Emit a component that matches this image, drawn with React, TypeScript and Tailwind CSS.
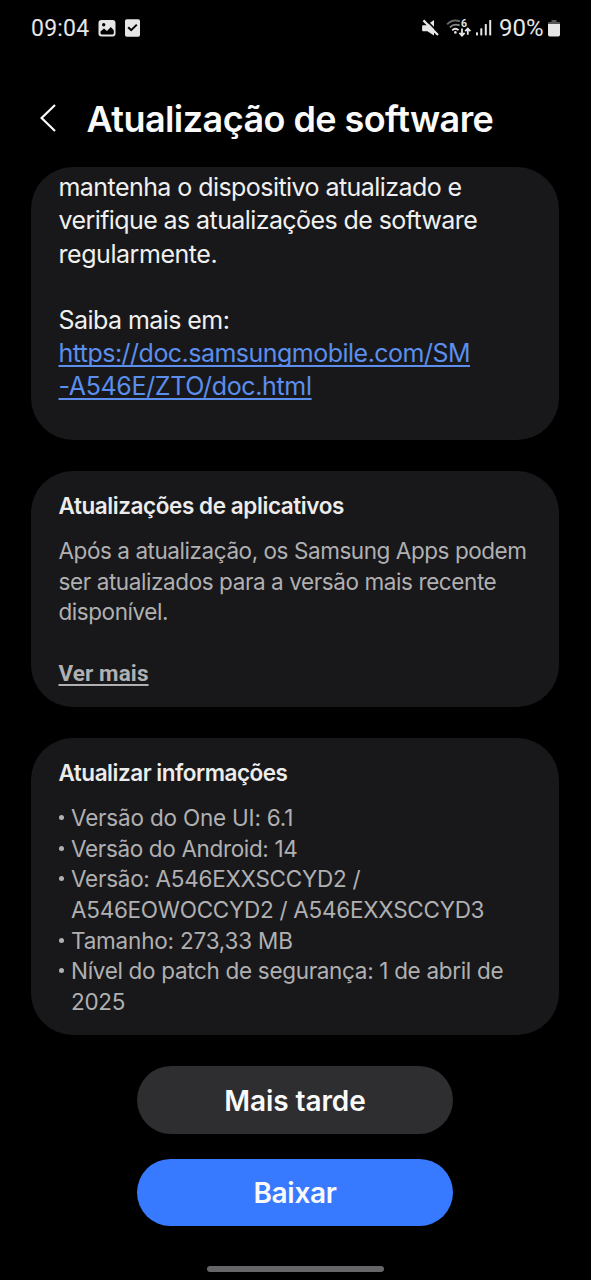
import type { ReactNode } from "react";

const updateInfo = [
  { lines: ["Versão do One UI: 6.1"], tracking: "tracking-[-0.2px]" },
  { lines: ["Versão do Android: 14"], tracking: "tracking-[-0.35px]" },
  {
    lines: ["Versão: A546EXXSCCYD2 /", "A546EOWOCCYD2 / A546EXXSCCYD3"],
    tracking: "tracking-[-0.27px]",
  },
  { lines: ["Tamanho: 273,33 MB"], tracking: "tracking-[-0.2px]" },
  {
    lines: ["Nível do patch de segurança: 1 de abril de", "2025"],
    tracking: "tracking-[-0.32px]",
  },
];

function StatusBar() {
  return (
    <div className="flex h-14 items-center justify-between pr-[31px] pl-[31px] text-[#e6e6e6]">
      <div className="flex items-center">
        <span className="w-[59px] font-[Roboto] text-[23px] leading-none tracking-[0.2px] whitespace-nowrap">
          09:04
        </span>
        <svg className="ml-2 h-[18px] w-[18px]" viewBox="0 0 18 18">
          <rect x="0.5" y="1" width="17" height="16.5" rx="3" fill="currentColor" />
          <circle cx="5.7" cy="5.7" r="1.7" fill="#000" />
          <path d="M2.5 12.5 6 9.5l3 2.6 3.8-4 3 3.2V14a1.6 1.6 0 0 1-1.6 1.6H4A1.6 1.6 0 0 1 2.5 14z" fill="#000" />
        </svg>
        <svg className="ml-[9px] h-[18px] w-[15px]" viewBox="0 0 15 18">
          <rect y="0.3" width="15" height="17.5" rx="1.8" fill="currentColor" />
          <path d="m3.2 8.2 3 3 5.6-5.6" fill="none" stroke="#000" strokeWidth="2" />
        </svg>
      </div>
      <div className="flex items-center">
        <svg className="h-[18px] w-[18px]" viewBox="0 0 18 18">
          <path d="M2 6.3h3.6L13 1v15.6l-6.6-4.4H2a.9.9 0 0 1-.9-.9V7.2A.9.9 0 0 1 2 6.3z" fill="currentColor" />
          <path d="m3.8-.2 15 15" stroke="#000" strokeWidth="1.6" />
          <path d="m2.4 1.4 14.6 14.6" stroke="currentColor" strokeWidth="2.2" />
        </svg>
        <svg className="ml-[7px] h-[20px] w-[25px]" viewBox="0 0 25 20">
          <g fill="none" strokeWidth="1.8">
            <path d="M1.2 6.3C4.6 2.6 9.6 1.8 14 3.4" stroke="#666" />
            <path d="M3.8 9.3C6.6 6.6 10.4 6 13.6 7.4" stroke="#888" />
            <path d="M6.2 12.3c1.9-1.8 4.5-1.8 6.4-.2" stroke="currentColor" />
            <path d="M16 10.6v7M13.4 14.9l2.6 2.7 2.6-2.7" stroke="currentColor" />
            <path d="M21.8 16.8V10.6M19.2 13.2l2.6-2.7 2.6 2.7" stroke="currentColor" />
          </g>
          <circle cx="9.4" cy="14.4" r="1.3" fill="currentColor" />
          <text x="15" y="8.6" fontFamily="Roboto" fontSize="10.5" fontWeight="700" fill="currentColor">
            6
          </text>
        </svg>
        <svg className="ml-[5px] h-[18px] w-[16px]" viewBox="0 0 16 18">
          <g fill="currentColor">
            <rect x="0" y="13.2" width="2" height="3.2" rx="0.6" />
            <rect x="4.3" y="9.2" width="2" height="7.2" rx="0.6" />
            <rect x="8.8" y="5" width="2" height="11.4" rx="0.6" />
            <rect x="13.2" y="1" width="2" height="15.4" rx="0.6" />
          </g>
        </svg>
        <span className="ml-[7px] w-[46px] font-[Roboto] text-[24px] leading-none whitespace-nowrap">
          90%
        </span>
        <svg className="ml-[3px] h-[18px] w-[12px]" viewBox="0 0 12 18">
          <path d="M3.5 1h5v2H11a1 1 0 0 1 1 1v2H0V4a1 1 0 0 1 1-1h2.5z" fill="#555" />
          <path d="M0 5h12v10.8a1.8 1.8 0 0 1-1.8 1.8H1.8A1.8 1.8 0 0 1 0 15.8z" fill="currentColor" />
        </svg>
      </div>
    </div>
  );
}

function Card({ className, children }: { className: string; children: ReactNode }) {
  return (
    <section
      className={`w-full overflow-hidden rounded-[42px] bg-[#18181a] px-[27.5px] whitespace-nowrap ${className}`}
    >
      {children}
    </section>
  );
}

export default function App() {
  return (
    <div className="flex h-[1280px] w-[591px] flex-col overflow-hidden bg-black font-[Inter,sans-serif]">
      <StatusBar />
      <header className="flex h-[111px] items-center pl-[39px] text-[#fafafa]">
        <svg className="mt-[13px] h-[30px] w-[18px]" viewBox="0 0 18 30" fill="none">
          <path d="M16 2 2.6 15 16 28" stroke="currentColor" strokeWidth="2.2" />
        </svg>
        <h1 className="mt-[14px] ml-[29.5px] text-[36px] leading-[44px] font-semibold tracking-[-0.56px] whitespace-nowrap">
          Atualização de software
        </h1>
      </header>

      <main className="flex flex-col gap-[31px] pr-8 pl-[31px]">
        <Card className="h-[273px] pt-1 text-[25px] leading-[33.3px] text-[#f0f0f0]">
          <p className="tracking-[-0.56px]">
            mantenha o dispositivo atualizado e<br />
            <span className="tracking-[-0.59px]">verifique as atualizações de software</span>
            <br />
            <span className="tracking-[-0.45px]">regularmente.</span>
          </p>
          <p className="mt-[33px] tracking-[-0.56px]">Saiba mais em:</p>
          <a
            href="#"
            className="block tracking-[-0.52px] text-[#5b8eed] underline decoration-[1.6px] underline-offset-[3px] [text-decoration-skip-ink:none]"
          >
            https://doc.samsungmobile.com/SM
            <br />
            <span className="tracking-[-0.35px]">-A546E/ZTO/doc.html</span>
          </a>
        </Card>

        <Card className="h-[236px] pt-[20.3px] text-[22.5px] leading-[30.65px] text-[#b0b0b2]">
          <h2 className="font-semibold tracking-[-0.42px] text-[#ececec]">
            Atualizações de aplicativos
          </h2>
          <p className="mt-[14px] tracking-[-0.44px]">
            Após a atualização, os Samsung Apps podem
            <br />
            <span className="tracking-[-0.41px]">ser atualizados para a versão mais recente</span>
            <br />
            disponível.
          </p>
          <a
            href="#"
            className="mt-[30px] block font-[Roboto] font-bold tracking-[0.1px] underline decoration-[1.5px] underline-offset-[3px]"
          >
            Ver mais
          </a>
        </Card>

        <Card className="h-[297px] pt-[20.3px] text-[22.5px] leading-[30.65px] text-[#b0b0b2]">
          <h2 className="font-semibold tracking-[-0.47px] text-[#ececec]">
            Atualizar informações
          </h2>
          <ul className="mt-[14px]">
            {updateInfo.map((item) => (
              <li key={item.lines[0]} className={`flex ${item.tracking}`}>
                <span className="mt-[12px] mr-[7.5px] h-[5px] w-[5px] rounded-full bg-[#b0b0b2]" />
                <div>
                  {item.lines.map((line) => (
                    <div key={line}>{line}</div>
                  ))}
                </div>
              </li>
            ))}
          </ul>
        </Card>
      </main>

      <div className="mt-[31px] flex flex-col items-center gap-[25px] pr-px text-[28px] font-semibold text-[#fafafa]">
        <button className="h-[68px] w-[316px] rounded-full bg-[#2e2e30] pt-px tracking-[-0.1px]">
          Mais tarde
        </button>
        <button className="h-[67px] w-[316px] rounded-full bg-[#387aff] pt-px tracking-[-0.3px]">
          Baixar
        </button>
      </div>
      <div className="mt-10 ml-[207px] h-[6px] w-[177px] rounded-full bg-[#666668]" />
    </div>
  );
}
